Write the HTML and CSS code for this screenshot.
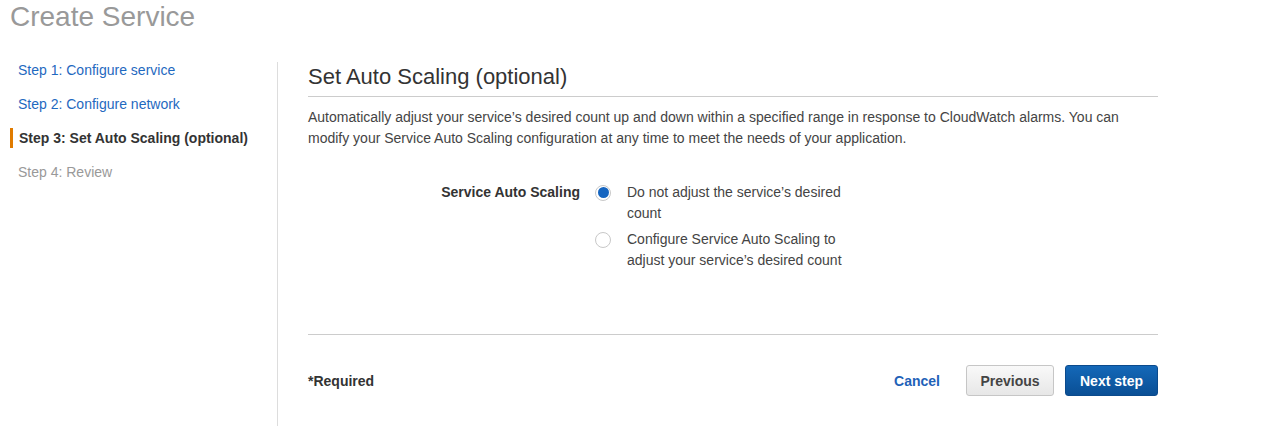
FILE: index.html
```html
<!DOCTYPE html>
<html>
<head>
<meta charset="utf-8">
<link rel="stylesheet" href="styles.css">
</head>
<body>
<h1 class="page-title">Create Service</h1>
<div class="layout">
  <nav class="sidebar">
    <ul class="steps">
      <li class="step"><a href="#">Step 1: Configure service</a></li>
      <li class="step"><a href="#">Step 2: Configure network</a></li>
      <li class="step step-active">Step 3: Set Auto Scaling (optional)</li>
      <li class="step step-disabled">Step 4: Review</li>
    </ul>
  </nav>
  <main class="content">
    <h2 class="section-title">Set Auto Scaling (optional)</h2>
    <p class="intro">Automatically adjust your service’s desired count up and down within a specified range in response to CloudWatch alarms. You can modify your Service Auto Scaling configuration at any time to meet the needs of your application.</p>
    <div class="form-row">
      <div class="form-label">Service Auto Scaling</div>
      <div class="options">
        <label class="option">
          <span class="radio radio-checked"></span>
          <span class="option-text">Do not adjust the service’s desired count</span>
        </label>
        <label class="option">
          <span class="radio"></span>
          <span class="option-text">Configure Service Auto Scaling to adjust your service’s desired count</span>
        </label>
      </div>
    </div>
    <div class="footer">
      <div class="required">*Required</div>
      <div class="actions">
        <a href="#" class="cancel">Cancel</a>
        <button class="btn btn-secondary">Previous</button>
        <button class="btn btn-primary">Next step</button>
      </div>
    </div>
  </main>
</div>
</body>
</html>
```

FILE: styles.css
```css
* { box-sizing: border-box; }
body {
  margin: 0;
  font-family: "Liberation Sans", Arial, sans-serif;
  font-size: 14px;
  color: #444;
  background: #fff;
}
.page-title {
  margin: 0;
  padding: 0 10px;
  font-size: 28px;
  font-weight: normal;
  line-height: 34px;
  color: #999;
}
.layout {
  display: flex;
  margin-top: 28px;
}
.sidebar {
  width: 278px;
  height: 364px;
  border-right: 1px solid #ddd;
}
.steps {
  list-style: none;
  margin: -2px 0 0 0;
  padding: 0;
  display: flex;
  flex-direction: column;
  gap: 14px;
}
.step {
  padding: 2px 0 2px 18px;
  line-height: 16px;
}
.step a {
  color: #1f69c0;
  text-decoration: none;
}
.step-active {
  font-weight: bold;
  color: #333;
  margin-left: 10px;
  padding-left: 6px;
  border-left: 3px solid #e07b00;
}
.step-disabled {
  color: #999;
}
.content {
  width: 880px;
  padding-left: 30px;
}
.section-title {
  margin: 2px 0 0 0;
  padding-bottom: 7px;
  border-bottom: 1px solid #ccc;
  font-size: 22px;
  font-weight: normal;
  line-height: 25px;
  color: #333;
}
.intro {
  margin: 10px 0 0 0;
  line-height: 21px;
  color: #444;
}
.form-row {
  display: flex;
  margin-top: 33px;
  padding-bottom: 63px;
  border-bottom: 1px solid #ccc;
}
.form-label {
  width: 272px;
  text-align: right;
  font-weight: bold;
  color: #333;
  line-height: 21px;
}
.options {
  margin-left: 15px;
  display: flex;
  flex-direction: column;
  gap: 5px;
}
.option {
  display: flex;
  align-items: flex-start;
}
.radio {
  flex: none;
  width: 16px;
  height: 16px;
  margin-top: 2.5px;
  border: 1px solid #c8c8c8;
  border-radius: 50%;
  background: #fff;
  position: relative;
}
.radio-checked::after {
  content: "";
  position: absolute;
  left: 1.5px;
  top: 1.5px;
  width: 11px;
  height: 11px;
  border-radius: 50%;
  background: #1565c0;
}
.option-text {
  margin-left: 16px;
  width: 225px;
  line-height: 21px;
  color: #444;
}
.footer {
  display: flex;
  align-items: center;
  justify-content: space-between;
  padding-top: 30px;
}
.required {
  font-weight: bold;
  color: #333;
}
.actions {
  display: flex;
  align-items: center;
}
.cancel {
  color: #1f62b8;
  font-weight: bold;
  text-decoration: none;
  margin-right: 26px;
}
.btn {
  height: 31px;
  padding: 0;
  font-family: "Liberation Sans", Arial, sans-serif;
  font-size: 14px;
  font-weight: bold;
  white-space: nowrap;
  border-radius: 3px;
  cursor: pointer;
}
.btn-secondary {
  width: 88px;
  color: #444;
  border: 1px solid #c6c6c6;
  background: linear-gradient(#f9f9f9, #e7e7e7);
}
.btn-primary {
  width: 93px;
  margin-left: 11px;
  color: #fff;
  border: 1px solid #0b4a8c;
  background: linear-gradient(#1468b8, #0a4f95);
}
```
